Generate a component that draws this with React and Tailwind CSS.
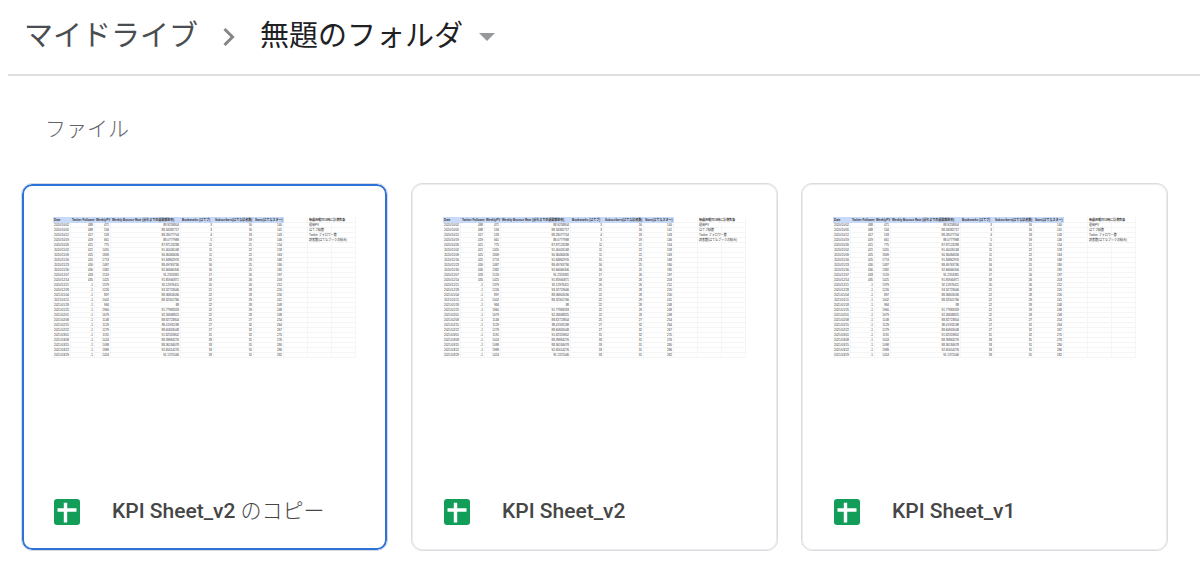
import React from "react";

const headers = [
  "Date",
  "Twitter Follower",
  "WeeklyPV",
  "Weekly Bounce Rate (前年までの週間離脱率)",
  "Bookmarks (はてブ)",
  "Subscribers(はてな読者数)",
  "Stars(はてなスター)",
];

const rows = [
  ["2020/10/02", "488", "471", "88.9258804", "3", "16", "140"],
  ["2020/10/05", "488", "534", "88.34382717", "3", "16", "141"],
  ["2020/10/12", "417", "533", "88.28077704", "4", "18", "143"],
  ["2020/10/19", "419", "661", "88.0777988", "5", "19", "146"],
  ["2020/10/26", "421", "775", "87.87123288", "11", "21", "154"],
  ["2020/11/02", "421", "1455", "91.40026168", "11", "22", "158"],
  ["2020/11/09", "425", "1849", "90.36484636", "11", "22", "163"],
  ["2020/11/16", "425", "1774", "91.84862976", "15", "23", "168"],
  ["2020/11/23", "430", "1487", "88.49763736", "16", "25", "180"],
  ["2020/11/30", "430", "1382", "92.66666306", "16", "25", "185"],
  ["2020/12/07", "433", "1519", "91.2353381", "17", "26", "197"],
  ["2020/12/14", "435", "1425", "91.85940871", "18", "26", "203"],
  ["2020/12/21", "-1", "1379", "92.12976411", "20", "26", "212"],
  ["2020/12/28", "-1", "1226", "93.32723646", "21", "28", "220"],
  ["2021/01/04", "-1", "897", "88.36803036", "22", "28", "230"],
  ["2021/01/11", "-1", "1002", "88.32301766", "22", "29", "241"],
  ["2021/01/18", "-1", "984", "88", "22", "28", "248"],
  ["2021/01/25", "-1", "1960", "91.77983333", "22", "29", "248"],
  ["2021/02/01", "-1", "1679", "92.26848825", "22", "28", "248"],
  ["2021/02/08", "-1", "1148", "88.82723804", "25", "27", "254"],
  ["2021/02/15", "-1", "1129", "88.41931188", "27", "32", "264"],
  ["2021/02/22", "-1", "1279", "88.60843048", "27", "32", "267"],
  ["2021/03/01", "-1", "1191", "91.82319802", "31", "32", "270"],
  ["2021/03/08", "-1", "1024", "88.39863276", "33", "31", "276"],
  ["2021/03/15", "-1", "1098", "88.36184678", "33", "31", "280"],
  ["2021/03/22", "-1", "1989", "92.65614276", "33", "31", "286"],
  ["2021/03/29", "-1", "1424", "91.1372046", "33", "31", "282"],
];

const notes = ["週間PV", "はてブ総数", "Twitter フォロワー数", "読者数(はてなブックの総合)"];

const files = [
  { name: "KPI Sheet_v2", suffix: " のコピー", selected: true },
  { name: "KPI Sheet_v2" },
  { name: "KPI Sheet_v1" },
];

const cell = "h-[5px] border-b border-r border-[#f5f5f5] p-0 pr-px";

function SheetPreview() {
  return (
    <table className="w-[303px] table-fixed border-separate border-spacing-0 whitespace-nowrap text-right font-['Liberation_Sans','Noto_Sans_CJK_JP',sans-serif] text-[3px] leading-[4px] text-[#333]">
      <colgroup>
        <col className="w-[18px]" />
        <col className="w-[24px]" />
        <col className="w-[16px]" />
        <col className="w-[70px]" />
        <col className="w-[33px]" />
        <col className="w-[40px]" />
        <col className="w-[30px]" />
        <col className="w-[24px]" />
        <col className="w-[24px]" />
        <col className="w-[24px]" />
      </colgroup>
      <thead>
        <tr>
          {headers.map((header) => (
            <th
              key={header}
              className="h-[6px] bg-[#c9daf8] p-0 pl-px text-left font-bold text-[#333]"
            >
              {header}
            </th>
          ))}
          <td className={cell} />
          <th className="h-[6px] border-b border-[#f5f5f5] p-0 pl-px text-left font-bold text-[#333]">
            毎週月曜日10時に計測対象
          </th>
          <td className={cell} />
        </tr>
      </thead>
      <tbody>
        {rows.map((row, i) => (
          <tr key={row[0]}>
            {row.map((value, j) => (
              <td key={j} className={cell}>
                {value}
              </td>
            ))}
            <td className={cell} />
            <td className={`${cell} pl-px text-left`}>{notes[i]}</td>
            <td className={cell} />
          </tr>
        ))}
      </tbody>
    </table>
  );
}

function SheetIcon() {
  return (
    <svg className="h-[26px] w-[26px] shrink-0" viewBox="0 0 26 26" aria-hidden="true">
      <rect width="26" height="26" rx="3" fill="#129e59" />
      <path d="M3.5 9.3h19v3.4h-9.3V23.5H9.8V12.7H3.5V9.3zM9.8 3.7h3.4v6H9.8z" fill="#fff" />
    </svg>
  );
}

function FileCard({ file }) {
  return (
    <button
      type="button"
      aria-pressed={Boolean(file.selected)}
      className={`flex h-[368px] min-w-0 flex-col overflow-hidden rounded-[11px] border bg-white text-left ${
        file.selected
          ? "border-[#d5dae3] inset-ring-2 inset-ring-[#2b73d9]"
          : "border-[#dadce0] inset-ring inset-ring-[#ebecef]"
      }`}
    >
      <div className="flex-1 pl-[31px] pt-[33px]">
        <SheetPreview />
      </div>
      <div className="flex h-[77px] w-full items-center gap-[32px] pl-[32px] text-[21px] font-medium text-[#464646]">
        <SheetIcon />
        <span className="truncate">
          {file.name}
          {file.suffix && <span className="font-light">{file.suffix}</span>}
        </span>
      </div>
    </button>
  );
}

export default function App() {
  return (
    <main className="min-h-screen overflow-hidden bg-white font-[Roboto,'Noto_Sans_CJK_JP',sans-serif]">
      <nav className="ml-2 flex h-[76px] items-center border-b-2 border-[#dedede] pl-4 text-[29px]">
        <a href="#drive" className="text-[#4a4d51]">
          マイドライブ
        </a>
        <svg className="ml-[25px] h-5 w-3" viewBox="0 0 12 20" fill="none" aria-hidden="true">
          <path d="M1.5 2l8 8-8 8" stroke="#858585" strokeWidth="3" />
        </svg>
        <button type="button" className="ml-[25px] flex items-center gap-4 text-[#202124]">
          無題のフォルダ
          <svg className="h-2 w-4" viewBox="0 0 16 8" aria-hidden="true">
            <path d="M0 0h16L8 8z" fill="#95999c" />
          </svg>
        </button>
      </nav>
      <h2 className="mt-[37px] pl-[45px] text-[21px] font-light leading-[32px] text-[#5f6368]">
        ファイル
      </h2>
      <section className="mt-[38px] grid grid-cols-3 gap-[23px] pl-[21px] pr-8">
        {files.map((file) => (
          <FileCard key={file.name + (file.suffix || "")} file={file} />
        ))}
      </section>
    </main>
  );
}
